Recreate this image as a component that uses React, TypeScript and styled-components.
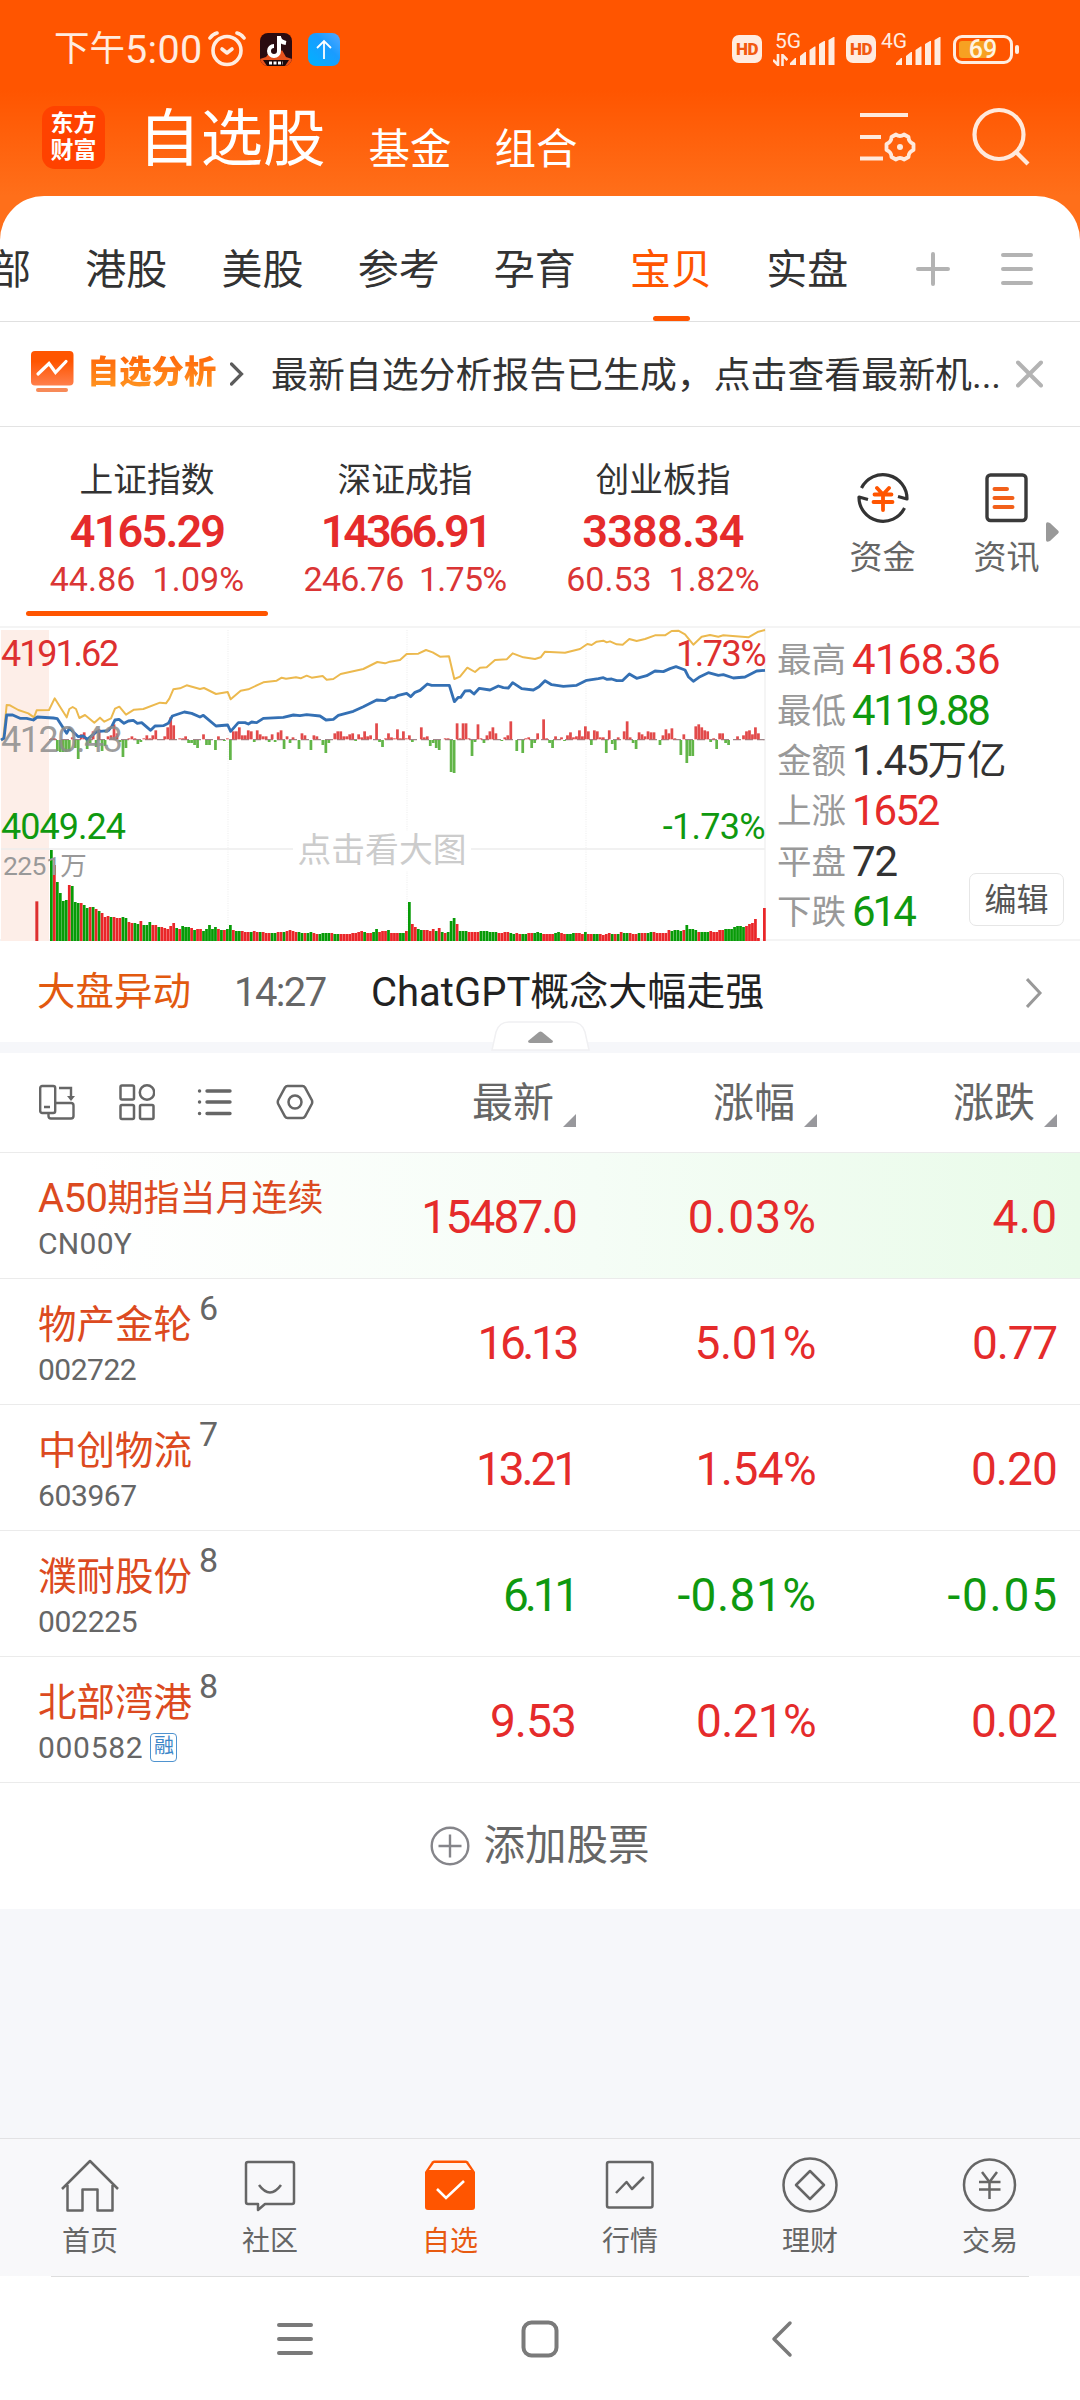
import React from "react";
import styled, { createGlobalStyle } from "styled-components";

const RED = "#e52b2b";
const GREEN = "#0f990f";
const ORANGE = "#ff5500";

const Global = createGlobalStyle`
  *, *::before, *::after { box-sizing: border-box; }
  html, body { margin: 0; padding: 0; }
  body {
    width: 1080px;
    background: #fff;
    color: #333;
    font-family: Roboto, "Noto Sans CJK SC", sans-serif;
    -webkit-font-smoothing: antialiased;
  }
  svg { display: block; flex: none; }
`;

const Screen = styled.div`
  width: 1080px;
  height: 2400px;
  overflow: hidden;
  display: flex;
  flex-direction: column;
  background: #fff;
`;

const Txt = styled.span<{ $s: number; $c?: string; $w?: number; $ls?: number }>`
  font-size: ${(p) => p.$s}px;
  color: ${(p) => p.$c ?? "inherit"};
  font-weight: ${(p) => p.$w ?? 400};
  letter-spacing: ${(p) => p.$ls ?? 0}px;
  line-height: 1;
  white-space: nowrap;
`;

/* ---------- header ---------- */
const Header = styled.header`
  height: 240px;
  flex: none;
  background: linear-gradient(#ff5500 0, #ff5500 90px, #ff6f1a 196px);
`;
const StatusBar = styled.div`
  height: 98px;
  padding: 0 61px 0 54px;
  display: flex;
  align-items: center;
  justify-content: space-between;
  color: #ffece0;
`;
const StatusGroup = styled.div`
  display: flex;
  align-items: center;
`;
const Clock = styled.div`
  display: flex;
  align-items: center;
  width: 146px;
  padding-top: 2px;
`;
const AppBadge = styled.div<{ $bg: string; $ml: number }>`
  width: 32px;
  height: 33px;
  margin-left: ${(p) => p.$ml}px;
  border-radius: 8px;
  overflow: hidden;
  background: ${(p) => p.$bg};
`;
const Hd = styled.div<{ $ml?: number }>`
  width: 30px;
  height: 28px;
  margin-left: ${(p) => p.$ml ?? 0}px;
  border-radius: 7px;
  background: #ffece0;
  color: #f25a10;
  font: 900 17px/29px Roboto, sans-serif;
  letter-spacing: -0.5px;
  text-align: center;
`;
const Signal = styled.div<{ $ml: number }>`
  position: relative;
  width: 60px;
  height: 34px;
  margin-left: ${(p) => p.$ml}px;
  display: flex;
  justify-content: flex-end;
  align-items: flex-end;
  gap: 2px;
`;
const NetLabel = styled.span`
  position: absolute;
  left: 0;
  top: -1px;
  font-size: 21px;
  line-height: 20px;
`;
const Battery = styled.div`
  position: relative;
  width: 60px;
  height: 29px;
  margin: 0 6px 0 12px;
  border: 3px solid #ffece0;
  border-radius: 9px;
  padding: 3px;
  &::before {
    content: "";
    display: block;
    width: 33px;
    height: 17px;
    border-radius: 3px;
    background: #f7a122;
  }
  &::after {
    content: "";
    position: absolute;
    right: -9px;
    top: 7px;
    width: 4px;
    height: 9px;
    border-radius: 2px;
    background: #ffece0;
  }
`;
const BatteryText = styled.span`
  position: absolute;
  inset: 0;
  font-size: 25px;
  line-height: 24px;
  font-weight: 500;
  text-align: center;
  color: #fff3e0;
`;
const TitleBar = styled.div`
  height: 98px;
  padding: 0 50px 20px 42px;
  display: flex;
  align-items: center;
  color: #fff;
`;
const Logo = styled.div`
  width: 63px;
  height: 63px;
  margin-right: 33px;
  border-radius: 13px;
  background: #ff4200;
  font-size: 23px;
  line-height: 27px;
  font-weight: 700;
  text-align: center;
  padding-top: 4px;
`;
const PageTitle = styled.span`
  padding-top: 6px;
  font-size: 62.5px;
  line-height: 64px;
  white-space: nowrap;
`;
const HeaderLink = styled.span<{ $ml: number }>`
  margin-left: ${(p) => p.$ml}px;
  padding-top: 25px;
  font-size: 41.5px;
  line-height: 41px;
`;
const Spacer = styled.div`
  flex: 1;
`;
const HeaderTools = styled.div`
  display: flex;
  align-items: center;
  gap: 52px;
`;

/* ---------- group tabs ---------- */
const Sheet = styled.nav`
  height: 126px;
  margin-top: -44px;
  flex: none;
  border-radius: 44px 44px 0 0;
  background: #fff;
  border-bottom: 1px solid #e0e0e0;
  display: flex;
  align-items: stretch;
  overflow: hidden;
`;
const GroupTabs = styled.div`
  display: flex;
  margin-left: -78px;
  flex: none;
`;
const GroupTab = styled.div<{ $on?: boolean; $pl?: number }>`
  width: 136.2px;
  padding-left: ${(p) => p.$pl ?? 0}px;
  display: flex;
  flex-direction: column;
  align-items: center;
  justify-content: flex-end;
  font-size: 41px;
  color: ${(p) => (p.$on ? ORANGE : "#333")};
  line-height: 60px;
  &::after {
    content: "";
    width: 37px;
    height: 5px;
    margin-top: 16px;
    border-radius: 3px;
    background: ${(p) => (p.$on ? ORANGE : "transparent")};
  }
`;
const TabTools = styled.div`
  flex: 1;
  display: flex;
  align-items: center;
  padding: 21px 0 0 40px;
  gap: 49px;
`;

/* ---------- notice ---------- */
const Notice = styled.div`
  height: 105px;
  flex: none;
  border-bottom: 1px solid #e3e3e3;
  display: flex;
  align-items: center;
  padding-left: 31px;
`;
const NoticeIcon = styled.svg`
  margin-bottom: 5px;
`;
const NoticeTitle = styled.span`
  margin: 0 14px 5px 13px;
  width: 129px;
  flex: none;
  font-size: 32.3px;
  line-height: 40px;
  font-weight: 900;
  white-space: nowrap;
  background: linear-gradient(#ff6a0c 15%, #ff9420 90%);
  -webkit-background-clip: text;
  background-clip: text;
  color: transparent;
`;
const NoticeText = styled.span`
  width: 745px;
  margin-left: 27px;
  padding-top: 3px;
  font-size: 36.9px;
  line-height: 50px;
  white-space: nowrap;
`;

/* ---------- indices ---------- */
const Indices = styled.section`
  height: 201px;
  flex: none;
  display: flex;
  padding-left: 18px;
  border-bottom: 2px solid #f4f4f4;
`;
const IndexCard = styled.div<{ $on?: boolean }>`
  width: 258px;
  display: flex;
  flex-direction: column;
  align-items: center;
  padding-top: 33px;
  color: ${RED};
  &::after {
    content: "";
    width: 242px;
    height: 5px;
    margin-top: 11px;
    border-radius: 3px;
    background: ${(p) => (p.$on ? ORANGE : "transparent")};
  }
`;
const IndexName = styled.span`
  font-size: 33.7px;
  line-height: 42px;
  color: #333;
`;
const IndexValue = styled.span<{ $ls: number }>`
  font-size: 45px;
  line-height: 52px;
  margin-top: 4px;
  font-weight: 600;
  letter-spacing: ${(p) => p.$ls}px;
`;
const IndexChange = styled.span<{ $ls: number }>`
  font-size: 34px;
  line-height: 42px;
  letter-spacing: ${(p) => p.$ls}px;
  white-space: pre;
  color: #da3535;
`;
const QuickLink = styled.div<{ $w: number }>`
  width: ${(p) => p.$w}px;
  display: flex;
  flex-direction: column;
  align-items: center;
  padding-top: 44px;
  gap: 13px;
  font-size: 33px;
  line-height: 40px;
  color: #666;
`;
const QuickArrow = styled.div`
  padding: 95px 0 0 6px;
`;

/* ---------- chart ---------- */
const Market = styled.section`
  height: 313px;
  flex: none;
  display: flex;
  border-bottom: 2px solid #f4f4f4;
`;
const ChartBox = styled.div`
  position: relative;
  width: 766px;
  height: 313px;
  flex: none;
`;
const ChartLabel = styled.span<{ $y: number; $c: string; $right?: boolean; $s?: number; $x?: number; $ls?: number }>`
  position: absolute;
  top: ${(p) => p.$y}px;
  ${(p) => (p.$right ? "right: 1px;" : `left: ${p.$x ?? 1}px;`)}
  font-size: ${(p) => p.$s ?? 36}px;
  line-height: 40px;
  letter-spacing: ${(p) => p.$ls ?? -0.6}px;
  color: ${(p) => p.$c};
`;
const ChartHint = styled.span`
  position: absolute;
  left: 293px;
  top: 203px;
  width: 178px;
  height: 40px;
  background: #fff;
  text-align: center;
  font-size: 33.8px;
  line-height: 40px;
  color: #ccc;
`;
const Stats = styled.div`
  position: relative;
  flex: 1;
  padding: 7px 0 0 11px;
`;
const Stat = styled.div`
  height: 50.4px;
  display: flex;
  align-items: center;
`;
const StatLabel = styled.span`
  width: 75px;
  font-size: 34.5px;
  line-height: 36px;
  color: #999;
`;
const EditButton = styled.button`
  position: absolute;
  right: 16px;
  bottom: 13px;
  width: 95px;
  height: 53px;
  padding: 0;
  border: 1px solid #e6e6e6;
  border-radius: 7px;
  background: #fff;
  font: 400 32px/50px Roboto, "Noto Sans CJK SC", sans-serif;
  color: #555;
`;

/* ---------- news ---------- */
const News = styled.div`
  position: relative;
  height: 112px;
  flex: none;
  border-bottom: 11px solid #f6f7fa;
  padding: 2px 37px 0 37px;
  display: flex;
  align-items: center;
`;
const NewsTime = styled.span`
  width: 137px;
  margin-left: 43px;
  font-size: 40px;
  line-height: 40px;
  letter-spacing: -1.6px;
  color: #666;
`;
const Handle = styled.div`
  position: absolute;
  left: 491px;
  bottom: -9px;
`;

/* ---------- table ---------- */
const TableRow = styled.div<{ $glow?: boolean }>`
  height: 126px;
  flex: none;
  display: grid;
  grid-template-columns: 334px 242px 240px 241px;
  align-items: center;
  border-bottom: 1px solid #ebebeb;
  background: ${(p) => (p.$glow ? "linear-gradient(90deg, #fff 8%, #f5fdf6 55%, #e9fbe9 100%)" : "#fff")};
`;
const HeadRow = styled(TableRow)`
  height: 100px;
  grid-template-columns: 335px 241px 241px 240px;
`;
const Tools = styled.div`
  display: flex;
  align-items: center;
  gap: 42.5px;
  padding: 0 0 2px 38px;
`;
const HeadCell = styled.div`
  display: flex;
  justify-content: flex-end;
  align-items: center;
  gap: 9px;
  font-size: 41px;
  line-height: 60px;
  color: #666;
  &::after {
    content: "";
    margin-top: 36px;
    width: 13px;
    height: 13px;
    background: #98989c;
    clip-path: polygon(100% 0, 100% 100%, 0 100%);
  }
`;
const NameCell = styled.div`
  padding: 10px 0 0 38px;
  display: flex;
  flex-direction: column;
`;
const NameLine = styled.div`
  display: flex;
  align-items: center;
  height: 46px;
  color: #dc4a20;
`;
const Sup = styled.span`
  font-size: 34px;
  line-height: 34px;
  color: #666;
  margin: -35px 0 0 7px;
`;
const CodeLine = styled.div<{ $ls: number }>`
  display: flex;
  align-items: center;
  height: 43px;
  gap: 7px;
  font-size: 30px;
  letter-spacing: ${(p) => p.$ls}px;
  color: #666;
`;
const Tag = styled.span`
  width: 27px;
  height: 29px;
  border: 1.5px solid #4f93cf;
  border-radius: 4px;
  font-size: 20px;
  line-height: 25px;
  letter-spacing: 0;
  text-align: center;
  color: #3c86c8;
`;
const Num = styled.div<{ $c: string; $ls: number }>`
  text-align: right;
  padding-top: 2px;
  font-size: 46px;
  letter-spacing: ${(p) => p.$ls}px;
  margin-right: ${(p) => -Math.max(p.$ls, 0)}px;
  color: ${(p) => p.$c};
`;
const AddRow = styled.div`
  height: 126px;
  flex: none;
  display: flex;
  align-items: center;
  justify-content: center;
  gap: 13px;
`;
const Filler = styled.div`
  height: 230px;
  flex: none;
  background: #f6f7fa;
  border-bottom: 1px solid #e2e2e4;
`;

/* ---------- bottom ---------- */
const BottomTabs = styled.nav`
  height: 137px;
  flex: none;
  display: grid;
  grid-template-columns: repeat(6, 180px);
  background: #f8f8fa;
`;
const BottomTab = styled.div<{ $on?: boolean }>`
  display: flex;
  flex-direction: column;
  align-items: center;
  padding-top: 16px;
  gap: 9px;
  font-size: 28px;
  line-height: 36px;
  color: ${(p) => (p.$on ? "#e85a10" : "#666")};
`;
const SystemNav = styled.div`
  height: 124px;
  flex: none;
  margin: 0 51px;
  border-top: 1px solid #dedede;
  display: flex;
  align-items: center;
  padding: 0 0 0 224px;
  gap: 205px;
`;
const BackIcon = styled.svg`
  margin-left: 5px;
`;

/* ---------- chart data (three units per pixel) ---------- */
const SHIFT = 1170;
const toPoints = (left: string, right: string) =>
  left +
  " " +
  right
    .split(" ")
    .map((p) => {
      const [x, y] = p.split(",").map(Number);
      return `${x + SHIFT},${y}`;
    })
    .join(" ");

const INDEX_LINE = toPoints(
  "3,390 12,385 20,315 38,315 60,325 80,325 100,330 112,321 160,324 172,326 200,370 208,355 235,380 250,378 262,388 290,365 325,362 335,350 345,330 357,328 372,340 385,333 400,331 412,340 425,338 452,361 465,348 490,347 505,340 517,318 535,312 553,306 575,310 600,321 610,316 648,348 683,345 692,364 715,338 735,338 745,342 755,336 770,338 790,325 850,322 880,315 900,317 920,314 960,318 978,330 1000,328 1015,316 1060,304 1090,290 1130,270 1155,272",
  "0,263 15,262 25,256 50,250 62,260 75,247 90,241 112,222 125,226 178,226 193,275 205,262 212,262 225,243 240,242 252,252 268,235 300,240 325,228 340,233 355,234 368,218 395,236 430,240 447,230 465,212 485,224 520,229 560,226 590,211 625,206 640,203 650,208 665,207 680,212 697,212 718,192 740,205 770,197 795,183 820,185 840,176 858,170 885,180 895,200 910,214 930,200 955,188 985,196 1000,194 1030,204 1065,201 1100,183 1125,181"
);
const AVERAGE_LINE = toPoints(
  "3,390 10,385 20,285 30,286 55,300 85,310 102,322 110,301 147,300 164,265 180,290 200,322 208,297 218,291 228,297 238,324 255,315 283,338 300,323 313,335 333,325 345,296 358,290 378,314 402,299 430,297 480,278 498,280 508,266 520,238 540,235 560,226 600,237 612,234 648,252 683,246 692,268 722,242 745,238 790,217 830,212 845,203 858,206 888,202 902,205 920,197 935,203 968,198 980,209 1000,207 1022,192 1090,177 1132,156 1155,160",
  "0,155 30,150 50,132 85,131 108,120 128,127 150,140 177,139 193,207 210,200 232,173 255,186 270,173 290,172 315,150 350,148 368,130 400,142 435,147 452,142 465,125 525,128 570,117 592,102 605,105 620,95 640,92 650,97 660,94 680,103 698,104 718,87 740,93 765,87 795,76 825,76 845,63 865,62 885,73 910,104 935,80 960,75 985,80 1000,76 1075,82 1105,65 1125,60"
);

/* net flow per minute */
const FLOW = [
  1, 1, -11, -12, -12, -12, -11, 2, -8, -19, 5, 7, -9, -3, 8, -7, 10, -11, -6, 3, 4, 15, 6, -2, -17, -8, 1, 3, 1, -4, -2, 1, 4, 1, 4, 9, 0, 0, 3, 12, 22, 14, 0, 1, 1, 3, -3,
  -3, -5, -8, 0, 5, -5, -5, 0, -10, 3, 0, -1, 1, -20, 8, 8, 12, 4, 4, 9, 8, -2, 9, 5, 3, 3, -2, 5, -2, 7, 9, -9, 3, -3, 2, 0, -9, 6, 4, 0, -10, 4, 3, 0, -5, -13, -3, 0, 6,
  8, 8, 3, 3, 5, 6, -1, 5, 2, 8, 3, 4, 0, 16, -2, -7, 1, 6, 2, 1, 10, 1, 8, 1, 4, -2, 0, 0, 12, 2, 3, -6, -3, -8, -10, 0, 1, 1, -32, -33, 16, 1, 16, 16, 1, -16, -2, 15, 1,
  -3, 4, 8, 12, 6, 0, -1, 2, 4, 18, 0, -11, 0, -13, 1, 2, -8, -3, 6, 0, 20, 1, -3, -8, 3, 0, 2, -1, 4, 7, 2, 3, 9, 3, 13, 8, -5, 9, 8, 2, 2, -13, 9, -4, -10, 2, 0, 8, 18,
  2, -3, -9, 7, 5, 3, 8, 7, 7, 0, -5, 4, 10, 6, 11, 1, 0, -15, 5, -23, -16, -16, 13, 15, 12, 9, 8, -2, 1, -9, 6, 6, -3, -5, 0, 0, 3, 0, 4, 8, 9, 5, 12, 6, 0,
];

/* traded volume per minute */
const VOLUME = [
  91, 76, 59, 48, 40, 41, 56, 55, 39, 38, 38, 36, 33, 34, 34, 32, 30, 28, 24, 25, 24, 24, 23, 23, 24, 23, 19, 18, 18, 17, 20, 16, 16, 19, 16, 16, 14, 14, 13, 12, 15, 18, 13, 12,
  15, 14, 14, 13, 11, 12, 12, 10, 12, 16, 12, 14, 12, 11, 11, 12, 16, 11, 10, 10, 10, 9, 9, 9, 10, 9, 9, 9, 8, 8, 8, 8, 9, 9, 9, 10, 11, 10, 9, 9, 8, 8, 8, 9, 8, 7, 7, 8, 8,
  8, 8, 7, 7, 7, 7, 7, 7, 8, 8, 9, 10, 9, 8, 8, 9, 12, 9, 10, 10, 11, 8, 8, 8, 8, 8, 10, 39, 17, 14, 12, 11, 11, 11, 10, 12, 10, 13, 9, 8, 9, 20, 23, 17, 10, 10, 10, 9, 9,
  9, 9, 10, 10, 10, 9, 9, 9, 8, 8, 9, 9, 8, 7, 8, 7, 7, 7, 8, 8, 8, 9, 8, 7, 7, 7, 7, 8, 9, 8, 7, 7, 7, 8, 8, 8, 7, 9, 7, 7, 7, 7, 7, 6, 7, 8, 7, 7, 7, 9, 8, 8, 8, 7, 7, 8,
  8, 8, 8, 9, 9, 8, 8, 8, 8, 11, 10, 11, 11, 10, 11, 16, 12, 12, 11, 9, 9, 9, 9, 10, 9, 9, 11, 11, 12, 12, 12, 14, 15, 15, 14, 15, 17, 18, 22, 3, 0, 33,
];
const VOLUME_SIGN =
  "grggggrgggrggrgrgrrrgrrrggrrggrgggrrgrrrrrgrgggrgrrgggggrgrgrrggrrrgrrgrrrggrrgrrrrggrggrrggggrggrrrrrrrrgrrggrrrgrrrggrrrrggrrrrgrgrgrgrgggrrrrggggggrrrrggrrggrrgggrrrrggrrgggrrrgrrggrrrrgrgrggrrrgrrggrrrrrrgrrrrrrggrgggrrrrrggrggggggrrrrrrr";
const ALWAYS_UP = new Set([1, 6, 121, 122, 136, 206, 207, 233, 234, 235, 236, 237, 239]);
const ALWAYS_DOWN = new Set([0, 2, 3, 4, 5, 7, 8, 53, 55, 60, 120, 134, 135, 209, 210, 211, 213, 214, 215, 226, 227, 228, 229, 231, 232]);

const STEP = 8.95;
const FIRST = 150;

const volumeColor = (i: number) => {
  if (ALWAYS_DOWN.has(i)) return "#079b07";
  if (ALWAYS_UP.has(i)) return "#ea2629";
  return VOLUME_SIGN[i] === "g" ? "#079b07" : "#ea2629";
};

function Chart() {
  return (
    <svg width={766} height={313} viewBox="0 54 2298 939">
      <rect x={3} y={60} width={144} height={933} fill="#fdeee8" />
      <g stroke="#ededed" strokeWidth={3} strokeDasharray="3 4">
        <path d="M684 60V993M1221 60V993M1758 60V993" />
      </g>
      <path d="M3 717H2295" stroke="#ececec" strokeWidth={5} />
      <path d="M2295 54V993" stroke="#f0f0f0" strokeWidth={4} />
      <path d="M147 389H2294" stroke="#a08488" strokeWidth={4} strokeDasharray="24 12" />
      {FLOW.map((v, i) =>
        v === 0 ? null : (
          <rect
            key={i}
            x={FIRST + i * STEP}
            y={v > 0 ? 388 - v * 3 : 390}
            width={8.2}
            height={Math.abs(v) * 3}
            fill={v > 0 ? "#e24a4a" : "#62b548"}
          />
        )
      )}
      {VOLUME.map((v, i) => (
        <rect key={i} x={FIRST + i * STEP} y={993 - v * 3} width={8.2} height={v * 3} fill={volumeColor(i)} />
      ))}
      <rect x={106} y={874} width={9} height={119} fill="#dd3030" />
      <polyline points={AVERAGE_LINE} fill="none" stroke="#ecb94e" strokeWidth={6} strokeLinejoin="round" />
      <polyline points={INDEX_LINE} fill="none" stroke="#3470b4" strokeWidth={8.5} strokeLinejoin="round" />
    </svg>
  );
}

const bars = (
  <svg width={45} height={29} viewBox="0 0 45 29" fill="#ffece0">
    <path d="M0 28V26L5 21H6V28ZM10 28V19L15 15H16V28ZM19.5 28V13L24.5 9.500H25.500V28ZM29 28V7L34 4H35V28ZM38.500 28V3L43.500 0H44.500V28Z" />
  </svg>
);

const INDEXES = [
  { name: "上证指数", value: "4165.29", vls: -1.8, change: "44.86  1.09%", cls: 0.1 },
  { name: "深证成指", value: "14366.91", vls: -3, change: "246.76  1.75%", cls: -0.75 },
  { name: "创业板指", value: "3388.34", vls: -0.8, change: "60.53  1.82%", cls: 0 },
];

const STATS = [
  { label: "最高", value: "4168.36", c: RED, ls: -0.7 },
  { label: "最低", value: "4119.88", c: GREEN, ls: -2.3 },
  { label: "金额", value: "1.45", unit: "万亿", c: "#333", ls: -1.6 },
  { label: "上涨", value: "1652", c: RED, ls: -2 },
  { label: "平盘", value: "72", c: "#333", ls: -1 },
  { label: "下跌", value: "614", c: GREEN, ls: -3 },
];

type Cell = [string, number];
const ROWS: { name: string; sup: string; code: string; cls: number; tag?: string; v: Cell[]; c: string }[] = [
  { name: "物产金轮", sup: "6", code: "002722", cls: -0.5, v: [["16.13", -3.4], ["5.01%", -0.4], ["0.77", -1.2]], c: RED },
  { name: "中创物流", sup: "7", code: "603967", cls: -0.4, v: [["13.21", -3.1], ["1.54%", -0.6], ["0.20", -0.9]], c: RED },
  { name: "濮耐股份", sup: "8", code: "002225", cls: -0.3, v: [["6.11", -4.2], ["-0.81%", 0.5], ["-0.05", 1.8]], c: GREEN },
  { name: "北部湾港", sup: "8", code: "000582", cls: 0.7, tag: "融", v: [["9.53", -0.9], ["0.21%", -0.7], ["0.02", -0.9]], c: RED },
];

const stroke = { fill: "none", stroke: "#666", strokeWidth: 2.5, strokeLinejoin: "round" as const };

const TABS = [
  {
    label: "首页",
    icon: <path {...stroke} d="M2 34L30 6L58 34M7.500 30V55.500H22.500V34.500H37.500V55.500H52.500V30" />,
  },
  {
    label: "社区",
    icon: (
      <g {...stroke}>
        <path d="M8 7H52Q54 7 54 9V47Q54 49 52 49H25L18 55V49H8Q6 49 6 47V9Q6 7 8 7Z" />
        <path d="M19 30Q30 45 41 30" />
      </g>
    ),
  },
  {
    label: "自选",
    icon: (
      <g>
        <path d="M5 17L12 6.500Q13 5.500 14.500 5.500H45.500Q47 5.500 48 6.500L55 17V52Q55 55 52 55H8Q5 55 5 52Z" fill={ORANGE} />
        <path d="M9 15L14 8H46L51 15Z" fill="#fff4ee" />
        <path d="M17 34L26 43L44 26" fill="none" stroke="#fff" strokeWidth={2.6} />
      </g>
    ),
  },
  {
    label: "行情",
    icon: (
      <g {...stroke}>
        <rect x={7} y={7} width={45.500} height={45.500} rx={2} />
        <path d="M16 38L26.500 27L32 34L44 22" />
      </g>
    ),
  },
  {
    label: "理财",
    icon: (
      <g {...stroke}>
        <circle cx={30} cy={30} r={26.500} />
        <path d="M30 16L44 30L30 44L16 30Z" />
      </g>
    ),
  },
  {
    label: "交易",
    icon: (
      <g {...stroke}>
        <circle cx={29.500} cy={30} r={25.500} />
        <path d="M22 17L29.500 27L37 17M19 27H40.500M19 34.500H40.500M29.500 27V44" />
      </g>
    ),
  },
];

export default function App() {
  return (
    <Screen>
      <Global />
      <Header>
        <StatusBar>
          <StatusGroup>
            <Clock>
              <Txt $s={35.500}>下午</Txt>
              <Txt $s={39.500} $ls={0.3}>5:00</Txt>
            </Clock>
            <svg width={54} height={36} viewBox="0 0 54 36" fill="none" stroke="#ffece0" strokeWidth={3.6} strokeLinecap="round">
              <circle cx={27} cy={19.500} r={14} />
              <path d="M22 18L27 22L32 18" strokeLinejoin="round" />
              <path d="M10 7Q13 3 17 2M44 7Q41 3 37 2" />
            </svg>
            <AppBadge $bg="#2a0b10" $ml={6}>
              <svg width={32} height={33} viewBox="0 0 32 33">
                <path d="M0 33V26L6 24L10 19L16 24L22 17L26 24L32 26V33Z" fill="#e8521c" />
                <path d="M3 27H29L25 33H7Z" fill="#1c0a0c" />
                <path d="M19 3V18A5 5 0 1 1 14 13" fill="none" stroke="#fff" strokeWidth={4} />
                <path d="M19 4Q20 9 26 10" fill="none" stroke="#fff" strokeWidth={4} />
                <path d="M9 30H23" stroke="#fff" strokeWidth={3} strokeDasharray="3 1.500" />
              </svg>
            </AppBadge>
            <AppBadge $bg="linear-gradient(45deg,#00b2ff,#1a9cff 60%,#55a8ff)" $ml={16}>
              <svg width={32} height={33} viewBox="0 0 32 33" fill="none" stroke="#fff" strokeWidth={1.8}>
                <path d="M16 26V8M9 15L16 8L23 15" />
              </svg>
            </AppBadge>
          </StatusGroup>
          <StatusGroup>
            <Hd>HD</Hd>
            <Signal $ml={13}>
              <NetLabel>5G</NetLabel>
              <svg width={15} height={12} viewBox="0 0 15 12" fill="none" stroke="#ffece0" strokeWidth={2.6}>
                <path d="M5 0V11L0 6M9.500 12V1L14.500 6" />
              </svg>
              {bars}
            </Signal>
            <Hd $ml={11}>HD</Hd>
            <Signal $ml={5}>
              <NetLabel>4G</NetLabel>
              {bars}
            </Signal>
            <Battery>
              <BatteryText>69</BatteryText>
            </Battery>
          </StatusGroup>
        </StatusBar>
        <TitleBar>
          <Logo>
            东方
            <br />
            财富
          </Logo>
          <PageTitle>自选股</PageTitle>
          <HeaderLink $ml={43}>基金</HeaderLink>
          <HeaderLink $ml={43}>组合</HeaderLink>
          <Spacer />
          <HeaderTools>
            <svg width={60} height={54} viewBox="0 0 60 54" fill="none" stroke="#ffe9dc" strokeWidth={4.200}>
              <path d="M2 5H50M2 27H23M2 48.500H25" />
              <path
                d="M38 24.500Q42 27.500 46 24.500L50.500 27Q50.500 32 55.500 34V40Q50.500 42 50.500 47L46 49.500Q42 46.500 38 49.500L33.500 47Q33.500 42 28.500 40V34Q33.500 32 33.500 27Z"
                strokeWidth={3.800}
                strokeLinejoin="round"
              />
              <circle cx={42} cy={37} r={3} fill="#ffe9dc" stroke="none" />
            </svg>
            <svg width={60} height={60} viewBox="0 0 60 60" fill="none" stroke="#ffe9dc" strokeWidth={4.200}>
              <circle cx={29} cy={27.500} r={24.500} />
              <path d="M45.500 44.500L58 57" />
            </svg>
          </HeaderTools>
        </TitleBar>
      </Header>

      <Sheet>
        <GroupTabs>
          <GroupTab $pl={41}>部</GroupTab>
          {["港股", "美股", "参考", "孕育", "宝贝", "实盘"].map((t) => (
            <GroupTab key={t} $on={t === "宝贝"}>
              {t}
            </GroupTab>
          ))}
        </GroupTabs>
        <TabTools>
          <svg width={36} height={36} viewBox="0 0 36 36" stroke="#b3b3b3" strokeWidth={4} strokeLinecap="round">
            <path d="M3 18H33M18 3V33" />
          </svg>
          <svg width={34} height={34} viewBox="0 0 34 34" stroke="#b3b3b3" strokeWidth={4} strokeLinecap="round">
            <path d="M3 3H31M3 17H31M3 31H31" />
          </svg>
        </TabTools>
      </Sheet>

      <Notice>
        <NoticeIcon width={43} height={42} viewBox="0 0 43 42">
          <defs>
            <linearGradient id="board" x1="0" y1="0" x2="0" y2="1">
              <stop offset="0.3" stopColor="#ff5500" />
              <stop offset="1" stopColor="#ff7f4c" />
            </linearGradient>
          </defs>
          <rect width={42.500} height={34.500} rx={4} fill="url(#board)" />
          <rect x={5} y={37} width={32} height={4} rx={2} fill="#f78a58" />
          <path d="M7 23L18 12.500L24.500 21.500L35 10.500" fill="none" stroke="#fff" strokeWidth={3.200} strokeLinecap="round" />
        </NoticeIcon>
        <NoticeTitle>自选分析</NoticeTitle>
        <svg width={14} height={24} viewBox="0 0 14 24" fill="none" stroke="#5c5c5c" strokeWidth={3.200} strokeLinecap="round">
          <path d="M1.500 2L11.500 12L1.500 22" />
        </svg>
        <NoticeText>最新自选分析报告已生成，点击查看最新机...</NoticeText>
        <svg width={27} height={28} viewBox="0 0 27 28" stroke="#b3b3b3" strokeWidth={4} strokeLinecap="round">
          <path d="M2 2.500L25 25.500M25 2.500L2 25.500" />
        </svg>
      </Notice>

      <Indices>
        {INDEXES.map((x, i) => (
          <IndexCard key={x.name} $on={i === 0}>
            <IndexName>{x.name}</IndexName>
            <IndexValue $ls={x.vls}>{x.value}</IndexValue>
            <IndexChange $ls={x.cls}>{x.change}</IndexChange>
          </IndexCard>
        ))}
        <QuickLink $w={181}>
          <svg width={54} height={54} viewBox="0 0 54 54" fill="none" stroke="#333" strokeWidth={3.200} strokeLinejoin="round">
            <path d="M5.500 17A24 24 0 0 1 51 28L42 25.500" />
            <path d="M48.500 37A24 24 0 0 1 3 26L12 28.500" />
            <path d="M21 17L27 23.500L33 17M18.500 23.500H35.500M17.500 31H36.500M27 24V39" stroke={ORANGE} strokeWidth={3.800} strokeLinecap="round" />
          </svg>
          资金
        </QuickLink>
        <QuickLink $w={67}>
          <svg width={44} height={54} viewBox="0 0 44 54" fill="none" stroke="#3a3a3a" strokeWidth={3.400}>
            <rect x={2} y={4} width={39} height={45.500} rx={3.500} />
            <path d="M9.500 18H22M9.500 27H27.500M9.500 36H27.500" stroke="#f2601a" strokeWidth={4} strokeLinecap="round" />
          </svg>
          资讯
        </QuickLink>
        <QuickArrow>
          <svg width={14} height={20} viewBox="0 0 14 20">
            <path d="M0 2Q0 -1 4 1L12 8.500Q13.500 10 12 11.500L4 19Q0 21 0 18Z" fill="#999" />
          </svg>
        </QuickArrow>
      </Indices>

      <Market>
        <ChartBox>
          <Chart />
          <ChartHint>点击看大图</ChartHint>
          <ChartLabel $y={6} $c="#dd3030" $ls={-2.1}>4191.62</ChartLabel>
          <ChartLabel $y={92} $c="rgba(140,140,140,.85)" $ls={-1.5}>4120.43</ChartLabel>
          <ChartLabel $y={179} $c={GREEN} $ls={-1}>4049.24</ChartLabel>
          <ChartLabel $y={218} $c="#999" $s={26.500} $x={3}>2251万</ChartLabel>
          <ChartLabel $y={6} $c="#dd3030" $right $ls={-1.5}>1.73%</ChartLabel>
          <ChartLabel $y={179} $c={GREEN} $right $ls={-0.7}>-1.73%</ChartLabel>
        </ChartBox>
        <Stats>
          {STATS.map((s) => (
            <Stat key={s.label}>
              <StatLabel>{s.label}</StatLabel>
              <Txt $s={42} $c={s.c} $ls={s.ls}>{s.value}</Txt>
              {s.unit && <Txt $s={39.500} $c={s.c}>{s.unit}</Txt>}
            </Stat>
          ))}
          <EditButton>编辑</EditButton>
        </Stats>
      </Market>

      <News>
        <Txt $s={38.500} $c="#e2590f">大盘异动</Txt>
        <NewsTime>14:27</NewsTime>
        <Txt $s={40} $c="#222">ChatGPT</Txt>
        <Txt $s={39} $c="#222">概念大幅走强</Txt>
        <Spacer />
        <svg width={17} height={30} viewBox="0 0 17 30" fill="none" stroke="#999" strokeWidth={3}>
          <path d="M1 1L14 15L1 29" />
        </svg>
        <Handle>
          <svg width={99} height={30} viewBox="0 0 99 30">
            <path d="M1 29L5 11Q8 1 18 1H81Q91 1 94 11L98 29Z" fill="#fff" stroke="#f0f0f2" strokeWidth={1.500} />
            <path d="M37 20L48 11Q49.500 10 51 11L62 20Q62 22 60 22H39Q37 22 37 20Z" fill="#999" />
          </svg>
        </Handle>
      </News>

      <HeadRow>
        <Tools>
          <svg width={38} height={38} viewBox="0 0 38 38" fill="none" stroke="#666" strokeWidth={2.400}>
            <rect x={2.200} y={3} width={15} height={27} rx={2} />
            <path d="M6 24H12M21 5H33V14M10.500 31V33Q10.500 35.500 13 35.500H33Q35.500 35.500 35.500 33V22.500Q35.500 20 33 20H18" />
            <path d="M29 13H37L33 18Z" fill="#666" stroke="none" />
          </svg>
          <svg width={36} height={38} viewBox="0 0 36 38" fill="none" stroke="#666" strokeWidth={2.500}>
            <rect x={1.500} y={2.500} width={13.500} height={14} rx={1.500} />
            <circle cx={28} cy={9.500} r={7.200} />
            <rect x={1.500} y={22} width={13.500} height={14} rx={1.500} />
            <rect x={21} y={22} width={13.500} height={14} rx={1.500} />
          </svg>
          <svg width={36} height={38} viewBox="0 0 36 38" stroke="#666" strokeWidth={3.400} strokeLinecap="round">
            <path d="M10 8H33M10 19H33M10 30.500H33M2.500 8H2.600M2.500 19H2.600M2.500 30.500H2.600" />
          </svg>
          <svg width={38} height={38} viewBox="0 0 38 38" fill="none" stroke="#666" strokeWidth={2.500}>
            <path d="M11.500 3H26.500Q28 3 29 4.500L36 17.500Q36.500 19 36 20.500L29 33.500Q28 35 26.500 35H11.500Q10 35 9 33.500L2 20.500Q1.500 19 2 17.500L9 4.500Q10 3 11.500 3Z" />
            <circle cx={19} cy={19} r={6.500} />
          </svg>
        </Tools>
        <HeadCell>最新</HeadCell>
        <HeadCell>涨幅</HeadCell>
        <HeadCell>涨跌</HeadCell>
      </HeadRow>

      <TableRow $glow>
        <NameCell>
          <NameLine>
            <Txt $s={40} $ls={-0.5}>A50</Txt>
            <Txt $s={36}>期指当月连续</Txt>
          </NameLine>
          <CodeLine $ls={0.3}>CN00Y</CodeLine>
        </NameCell>
        <Num $c={RED} $ls={-1.8}>15487.0</Num>
        <Num $c={RED} $ls={1.2}>0.03%</Num>
        <Num $c={RED} $ls={0.3}>4.0</Num>
      </TableRow>
      {ROWS.map((r) => (
        <TableRow key={r.code}>
          <NameCell>
            <NameLine>
              <Txt $s={38.500}>{r.name}</Txt>
              <Sup>{r.sup}</Sup>
            </NameLine>
            <CodeLine $ls={r.cls}>
              {r.code}
              {r.tag && <Tag>{r.tag}</Tag>}
            </CodeLine>
          </NameCell>
          {r.v.map(([v, ls]) => (
            <Num key={v} $c={r.c} $ls={ls}>{v}</Num>
          ))}
        </TableRow>
      ))}

      <AddRow>
        <svg width={40} height={40} viewBox="0 0 40 40" fill="none" stroke="#85858a" strokeWidth={2.400}>
          <circle cx={20} cy={20} r={18.300} />
          <path d="M8.500 20H31.500M20 8.500V31.500" />
        </svg>
        <Txt $s={41.500} $c="#666">添加股票</Txt>
      </AddRow>
      <Filler />

      <BottomTabs>
        {TABS.map((t) => (
          <BottomTab key={t.label} $on={t.label === "自选"}>
            <svg width={60} height={60} viewBox="0 0 60 60">
              {t.icon}
            </svg>
            {t.label}
          </BottomTab>
        ))}
      </BottomTabs>
      <SystemNav>
        <svg width={40} height={40} viewBox="0 0 40 40" stroke="#7a7a7a" strokeWidth={4} strokeLinecap="round">
          <path d="M4 6H36M4 20H36M4 34H36" />
        </svg>
        <svg width={40} height={40} viewBox="0 0 40 40" fill="none" stroke="#7a7a7a" strokeWidth={4}>
          <rect x={3.500} y={3.500} width={33} height={33} rx={8} />
        </svg>
        <BackIcon width={24} height={40} viewBox="0 0 24 40" fill="none" stroke="#7a7a7a" strokeWidth={3.500} strokeLinecap="round" strokeLinejoin="round">
          <path d="M20 4L4 20L20 36" />
        </BackIcon>
      </SystemNav>
    </Screen>
  );
}
